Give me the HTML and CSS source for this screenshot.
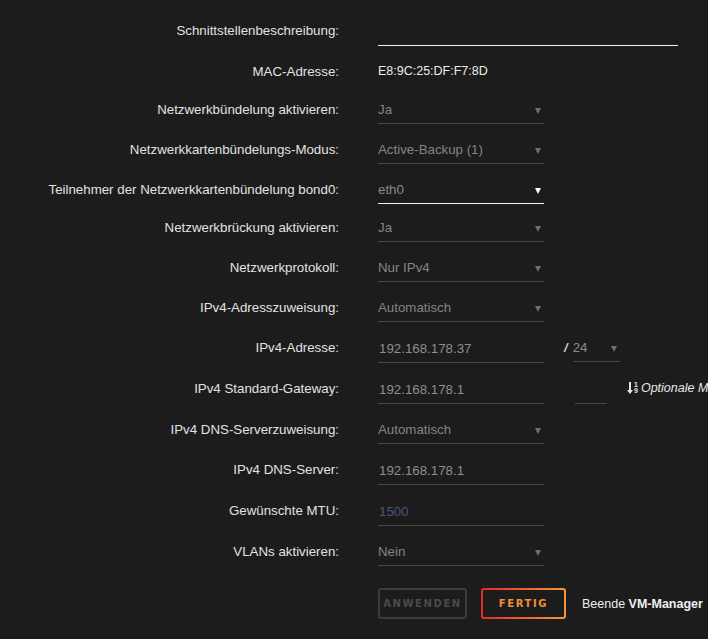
FILE: index.html
```html
<!DOCTYPE html>
<html lang="de">
<head>
    <meta charset="UTF-8">
    <title>Netzwerkeinstellungen</title>
    <link rel="stylesheet" href="styles.css">
</head>
<body>
    <form class="settings">
        <div class="row">
            <label>Schnittstellenbeschreibung:</label>
            <div class="field"><input type="text" class="text wide active"></div>
        </div>
        <div class="row dn1">
            <label>MAC-Adresse:</label>
            <div class="field"><span class="plain">E8:9C:25:DF:F7:8D</span></div>
        </div>
        <div class="row up2">
            <label>Netzwerkbündelung aktivieren:</label>
            <div class="field"><div class="select">Ja<span class="caret"></span></div></div>
        </div>
        <div class="row">
            <label>Netzwerkkartenbündelungs-Modus:</label>
            <div class="field"><div class="select">Active-Backup (1)<span class="caret"></span></div></div>
        </div>
        <div class="row">
            <label>Teilnehmer der Netzwerkkartenbündelung bond0:</label>
            <div class="field"><div class="select active">eth0<span class="caret"></span></div></div>
        </div>
        <div class="row up2">
            <label>Netzwerkbrückung aktivieren:</label>
            <div class="field"><div class="select">Ja<span class="caret"></span></div></div>
        </div>
        <div class="row">
            <label>Netzwerkprotokoll:</label>
            <div class="field"><div class="select">Nur IPv4<span class="caret"></span></div></div>
        </div>
        <div class="row">
            <label>IPv4-Adresszuweisung:</label>
            <div class="field"><div class="select">Automatisch<span class="caret"></span></div></div>
        </div>
        <div class="row">
            <label>IPv4-Adresse:</label>
            <div class="field">
                <input type="text" class="text" value="192.168.178.37">
                <span class="slash">/</span>
                <div class="select mask">24<span class="caret"></span></div>
            </div>
        </div>
        <div class="row dn1">
            <label>IPv4 Standard-Gateway:</label>
            <div class="field">
                <input type="text" class="text" value="192.168.178.1">
                <input type="text" class="text metric">
                <span class="hint">
                    <span class="sort-icon">
                        <svg width="6" height="12" viewBox="0 0 6 12"><path d="M2 0h2v8h2l-3 4-3-4h2z" fill="#e6e6e6"/></svg>
                        <span class="digits"><span>1</span><span>9</span></span>
                    </span>
                    <i>Optionale Metrik</i>
                </span>
            </div>
        </div>
        <div class="row dn1">
            <label>IPv4 DNS-Serverzuweisung:</label>
            <div class="field"><div class="select">Automatisch<span class="caret"></span></div></div>
        </div>
        <div class="row">
            <label>IPv4 DNS-Server:</label>
            <div class="field"><input type="text" class="text" value="192.168.178.1"></div>
        </div>
        <div class="row dn1">
            <label>Gewünschte MTU:</label>
            <div class="field"><input type="text" class="text" placeholder="1500"></div>
        </div>
        <div class="row dn1">
            <label>VLANs aktivieren:</label>
            <div class="field"><div class="select">Nein<span class="caret"></span></div></div>
        </div>
        <div class="actions">
            <button type="button" class="btn" disabled>Anwenden</button>
            <button type="button" class="btn done">Fertig</button>
            <span class="note">Beende <b>VM-Manager</b></span>
        </div>
    </form>
</body>
</html>
```

FILE: styles.css
```css
body {
    margin: 0;
    background-color: #1c1c1c;
    font-family: 'Liberation Sans', Arial, sans-serif;
    font-size: 13.3px;
    color: #e4e4e4;
    overflow: hidden;
}

.settings {
    padding-top: 10px;
    width: 708px;
}

.row {
    display: grid;
    grid-template-columns: 339px 1fr;
    column-gap: 39px;
    align-items: center;
    height: 40px;
}

/* small nudges so the rows sit on the same lines as the original */
.row.dn1 {
    margin-top: 1px;
}

.row.up2 {
    margin-top: -2px;
}

.row label {
    text-align: right;
    color: #e2e2e2;
    white-space: nowrap;
}

.field {
    display: flex;
    align-items: center;
    white-space: nowrap;
}

.plain {
    color: #ececec;
    font-size: 12.5px;
}

.text {
    box-sizing: border-box;
    width: 166px;
    height: 28px;
    padding: 0 1px;
    margin: 0;
    background: transparent;
    border: none;
    border-bottom: 1px solid #464646;
    color: #8e8e8e;
    font-family: inherit;
    font-size: 13.3px;
    outline: none;
    transform: translateY(2px);
}

.text::placeholder {
    color: #4a5584;
}

.text.wide {
    width: 300px;
}

.text.active {
    border-bottom-color: #f2f2f2;
}

.select {
    box-sizing: border-box;
    position: relative;
    width: 166px;
    height: 28px;
    line-height: 27px;
    transform: translateY(1px);
    border-bottom: 1px solid #464646;
    color: #848484;
}

.select.active {
    border-bottom-color: #f2f2f2;
    color: #8a8a8a;
}

.caret {
    position: absolute;
    right: 3px;
    top: 12px;
    width: 0;
    height: 0;
    border-left: 3px solid transparent;
    border-right: 3px solid transparent;
    border-top: 6px solid #6e6e6e;
}

.select.active .caret {
    border-top-color: #ffffff;
}

.slash {
    margin-left: 20px;
    margin-right: 5px;
    color: #cfcfcf;
    font-size: 13px;
    font-weight: bold;
    font-style: italic;
}

.select.mask {
    width: 47px;
    color: #8a8a8a;
}

.text.metric {
    width: 32px;
    margin-left: 31px;
}

.hint {
    display: inline-flex;
    align-items: center;
    margin-left: 20px;
    color: #e8e8e8;
    font-size: 12.5px;
}

.sort-icon {
    display: inline-flex;
    align-items: center;
    margin-right: 3px;
}

.digits {
    display: inline-flex;
    flex-direction: column;
    font-size: 7px;
    line-height: 6px;
    font-weight: bold;
    margin-left: 1px;
}

.actions {
    display: flex;
    align-items: center;
    padding-left: 378px;
    margin-top: 17px;
}

.btn {
    box-sizing: border-box;
    height: 31px;
    padding: 0;
    margin-right: 14px;
    background: #1c1c1c;
    border: 2px solid #3c3c3c;
    border-radius: 3px;
    color: #4b4b4b;
    font-family: 'DejaVu Sans', sans-serif;
    font-size: 10px;
    font-weight: bold;
    letter-spacing: 1.6px;
    text-transform: uppercase;
}

.btn:disabled {
    width: 89px;
}

.btn.done {
    width: 85px;
    margin-right: 16px;
    color: #f0903a;
    border-color: transparent;
    background:
        linear-gradient(#1c1c1c, #1c1c1c) padding-box,
        linear-gradient(90deg, #e22a2a, #f7963a) border-box;
}

.note {
    color: #efefef;
    font-size: 12.5px;
}
```
